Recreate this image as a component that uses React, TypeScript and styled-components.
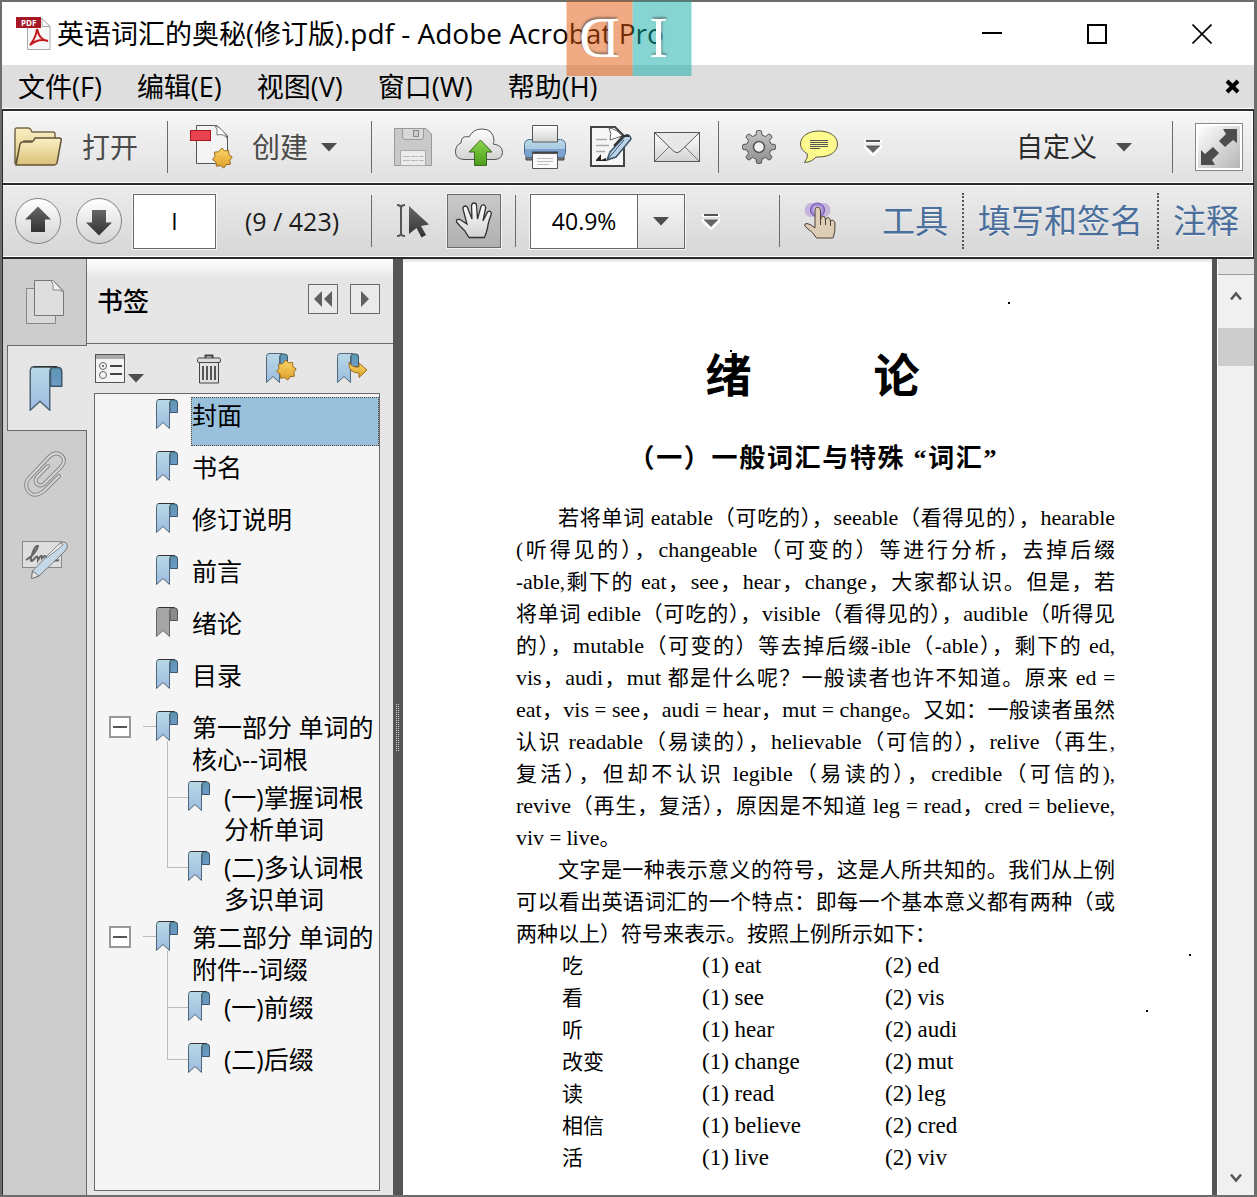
import React from "react";
import styled, { createGlobalStyle, css } from "styled-components";

const UI_FONT = `"Open Sans", "Noto Sans", "Noto Sans CJK SC", sans-serif`;
const BOOK_FONT = `"Liberation Serif", "Noto Sans CJK SC", serif`;

const Global = createGlobalStyle`
  * { box-sizing: border-box; }
  body { margin: 0; font-family: ${UI_FONT}; color: #000; }
  button { border: 0; padding: 0; margin: 0; background: none; font: inherit; color: inherit; cursor: pointer; }
  svg { display: block; flex: none; }
`;

/* ---------- window ---------- */

const Frame = styled.div`
  position: relative;
  min-height: 100vh;
  padding: 2px 3px 2px 2px;
  background: #6c6e6c;
  display: flex;
  flex-direction: column;
`;

const TitleBar = styled.header`
  display: flex;
  align-items: center;
  height: 63px;
  padding-left: 14px;
  background: #fff;
`;

const WindowTitle = styled.h1`
  flex: 1;
  margin: 0 0 0 6px;
  font-size: 27px;
  line-height: 36px;
  font-weight: 400;
  white-space: nowrap;
`;

const AppName = styled.span`
  font-size: 28px;
`;

const WindowButton = styled.button`
  width: 105px;
  height: 60px;
  display: flex;
  align-items: center;
  justify-content: center;
`;

const Watermark = styled.div`
  position: absolute;
  top: 1px;
  left: 50%;
  transform: translateX(-50%);
  display: flex;
  height: 75px;
  pointer-events: none;
`;

const WatermarkHalf = styled.span<{ $tint: string; $width: number; $flip?: boolean }>`
  width: ${(p) => p.$width}px;
  padding-right: ${(p) => (p.$flip ? 0 : 6)}px;
  background: ${(p) => p.$tint};
  display: flex;
  align-items: center;
  justify-content: center;
  color: #fff;
  font-family: "Liberation Serif", serif;
  font-size: 56px;
  line-height: 75px;
  text-shadow: 1px -2px 2px rgba(60, 60, 60, 0.5);
  ${(p) => p.$flip && "transform: scaleX(-1);"}
`;

const MenuBar = styled.nav`
  display: flex;
  align-items: center;
  gap: 35px;
  height: 44px;
  padding: 0 11px 0 16px;
  background: #dedede;
  border-bottom: 1px solid #fff;
`;

const MenuItem = styled.button`
  font-size: 27px;
  line-height: 36px;
  white-space: nowrap;
`;

const MenuClose = styled.button`
  margin-left: auto;
`;

/* ---------- toolbars ---------- */

const Toolbar = styled.div<{ $from: string; $to: string }>`
  display: flex;
  align-items: center;
  height: 74px;
  border-top: 2px solid #2b2b2b;
  border-left: 1px solid #2b2b2b;
  border-right: 1px solid #2b2b2b;
  background: linear-gradient(${(p) => p.$from}, ${(p) => p.$to});
  box-shadow: inset 0 1px #fff, inset 0 -1px #fff, inset -1px 0 #fff;
  color: #4a4a4a;
`;

const Group = styled.div<{ $left?: number; $right?: number; $gap?: number; $push?: boolean }>`
  display: flex;
  align-items: center;
  height: 52px;
  gap: ${(p) => p.$gap ?? 0}px;
  padding-left: ${(p) => p.$left ?? 0}px;
  padding-right: ${(p) => p.$right ?? 0}px;
  ${(p) => p.$push && "margin-left: auto;"}
`;

const Divider = styled.span<{ $dotted?: boolean }>`
  height: ${(p) => (p.$dotted ? 56 : 52)}px;
  border-left: ${(p) => (p.$dotted ? "2px dotted #555" : "1px solid #6a6a6a")};
`;

const ToolButton = styled.button<{ $width?: number; $gap?: number; $dark?: boolean }>`
  display: flex;
  align-items: center;
  justify-content: ${(p) => (p.$width ? "center" : "flex-start")};
  gap: ${(p) => p.$gap ?? 0}px;
  ${(p) => p.$width && `width: ${p.$width}px;`}
  height: 52px;
  font-size: ${(p) => (p.$dark ? 27 : 28)}px;
  line-height: 40px;
  color: ${(p) => (p.$dark ? "#2b2b2b" : "#4a4a4a")};
  white-space: nowrap;
`;

const PressedButton = styled(ToolButton)`
  height: 54px;
  border: 1px solid #6a6a6a;
  background: linear-gradient(#c9c9c9, #b0b0b0);
  box-shadow: 0 0 0 1px #f2f2f2;
`;

const FullScreenButton = styled.button`
  width: 48px;
  height: 48px;
  padding: 2px;
  border: 1px solid #888;
  background: linear-gradient(135deg, #fff, #b5b5b5) content-box, #fff;
`;

const fieldBox = css`
  height: 55px;
  border: 1px solid #666;
  background: #fff;
  font-family: ${UI_FONT};
  font-size: 23px;
  color: #000;
  text-align: center;
  outline: 0;
`;

const PageInput = styled.input`
  ${fieldBox}
  width: 83px;
  padding: 0;
  box-shadow: 0 0 0 1px #f5f5f5;
`;

const PageCount = styled.span`
  font-size: 25px;
  line-height: 32px;
  color: #1c1c1c;
  white-space: nowrap;
`;

const Combo = styled.div`
  display: flex;
  width: 155px;
  box-shadow: 0 0 0 1px #f5f5f5;
`;

const ComboInput = styled.input`
  ${fieldBox}
  flex: 1;
  min-width: 0;
  padding: 0;
`;

const ComboButton = styled.button`
  width: 47px;
  height: 55px;
  border: 1px solid #666;
  border-left: 0;
  background: linear-gradient(#f6f6f6, #dedede);
  display: flex;
  align-items: center;
  justify-content: center;
`;

const PaneLink = styled.button`
  padding: 0 14px;
  font-size: 33px;
  line-height: 44px;
  color: #4b6f9c;
  text-shadow: 0 1px #f2f2f2;
  white-space: nowrap;
`;

/* ---------- work area ---------- */

const WorkArea = styled.div`
  flex: 1;
  display: flex;
  border-top: 2px solid #2b2b2b;
  border-left: 1px solid #2b2b2b;
`;

const Rail = styled.nav`
  width: 84px;
  display: flex;
  flex-direction: column;
  background: linear-gradient(to left, #6a6a6a 1px, #cdcdcd 1px);
`;

const RailTab = styled.button<{ $active?: boolean }>`
  height: 86px;
  display: flex;
  align-items: center;
  justify-content: center;
  ${(p) =>
    p.$active &&
    `
    margin-left: 4px;
    padding-right: 4px;
    background: #e6e6e6;
    border: 1px solid #6a6a6a;
    border-right: 0;
  `}
`;

const Panel = styled.aside`
  width: 306px;
  display: flex;
  flex-direction: column;
  background: #e6e6e6;
`;

const PanelHeader = styled.div`
  display: flex;
  align-items: center;
  gap: 12px;
  height: 85px;
  padding: 0 13px 4px 10px;
  border-bottom: 1px solid #6a6a6a;
  background: linear-gradient(#fff, #e6e6e6 20px);
`;

const PanelTitle = styled.h2`
  flex: 1;
  margin: 0;
  padding-top: 4px;
  font-size: 26px;
  line-height: 36px;
  font-weight: 500;
`;

const SquareButton = styled.button`
  width: 30px;
  height: 30px;
  border: 1px solid #6a6a6a;
  display: flex;
  align-items: center;
  justify-content: center;
  background: #eaeaea;
`;

const PanelTools = styled.div`
  display: grid;
  grid-template-columns: 102px 69px 71px 31px;
  align-items: center;
  height: 49px;
  padding-left: 8px;
`;

const OptionsButton = styled.button`
  display: flex;
  align-items: flex-end;
  gap: 2px;
`;

const Tree = styled.ul`
  flex: 1;
  list-style: none;
  margin: 0 13px 4px 7px;
  padding: 3px 0 0 14px;
  border: 1px solid #6a6a6a;
  background: #f5f5f5;
`;

const Branch = styled.ul`
  list-style: none;
  margin: 0;
  padding: 0 0 0 32px;
`;

const Node = styled.li<{ $child?: boolean; $span?: number }>`
  position: relative;
  ${(p) =>
    p.$child &&
    css`
      &::before {
        content: "";
        position: absolute;
        left: 26px;
        top: ${18 - p.$span!}px;
        width: 22px;
        height: ${p.$span}px;
        border-left: 1px solid #bbb;
        border-bottom: 1px solid #bbb;
      }
    `}
`;

const NodeRow = styled.div`
  display: grid;
  grid-template-columns: 22px 12px 13px 22px 14px 1fr;
  align-items: start;
`;

const Expander = styled.button`
  grid-column: 1;
  width: 22px;
  height: 22px;
  margin-top: 7px;
  border: 2px solid #999;
  background: #fff;
  display: flex;
  align-items: center;
  justify-content: center;
`;

const Stub = styled.span`
  grid-column: 3;
  height: 18px;
  border-bottom: 1px solid #bbb;
`;

const NodeIcon = styled.span`
  position: relative;
  grid-column: 4;
  padding-top: 2px;
`;

const NodeLabel = styled.a<{ $selected?: boolean }>`
  grid-column: 6;
  min-height: 49px;
  margin: 0 0 3px -1px;
  padding: 1px 0 0;
  border: 1px ${(p) => (p.$selected ? "dotted #5a4a3a" : "solid transparent")};
  background: ${(p) => (p.$selected ? "#99c1dc" : "transparent")};
  color: #000;
  text-decoration: none;
  font-size: 25px;
  line-height: 32px;
  white-space: pre;
`;

const Splitter = styled.div`
  width: 10px;
  padding-right: 2px;
  display: flex;
  align-items: center;
  justify-content: center;
  background: #555;
`;

const Grip = styled.span`
  width: 3px;
  height: 48px;
  background: repeating-linear-gradient(#555 0 1px, transparent 1px 2px),
    repeating-linear-gradient(to right, #ccc 0 1px, #555 1px 2px);
`;

const Page = styled.main`
  position: relative;
  flex: 1;
  min-width: 0;
  padding: 86px 97px 20px 113px;
  background: linear-gradient(#ddd, #fff 4px);
  font-family: ${BOOK_FONT};
`;

const Speck = styled.i<{ $x: number; $y: number }>`
  position: absolute;
  left: ${(p) => p.$x}px;
  top: ${(p) => p.$y}px;
  width: 2px;
  height: 2px;
  background: #000;
`;

const Headings = styled.header`
  padding-right: 6px;
`;

const Chapter = styled.h1`
  display: flex;
  justify-content: center;
  gap: 122px;
  margin: 0;
  font-size: 46px;
  line-height: 64px;
  font-weight: 700;
`;

const Section = styled.h2`
  width: 368px;
  margin: 34px auto 27px;
  font-size: 26px;
  line-height: 32px;
  font-weight: 700;
  text-align: justify;
  text-align-last: justify;
  white-space: nowrap;
`;

const Paragraph = styled.p`
  margin: 0;
  font-size: 21px;
  line-height: 32px;
`;

const Line = styled.span<{ $indent?: boolean; $loose?: boolean }>`
  display: block;
  height: 32px;
  white-space: nowrap;
  padding-left: ${(p) => (p.$indent ? 42 : 0)}px;
  text-align: justify;
  text-align-last: ${(p) => (p.$loose ? "left" : "justify")};
`;

const Latin = styled.span`
  font-size: 22px;
`;

const Roots = styled.table`
  margin-left: 46px;
  border-collapse: collapse;
  font-size: 23px;
  line-height: 32px;
`;

const RootWord = styled.td`
  width: 140px;
  padding: 0;
  font-size: 21px;
`;

const RootCell = styled.td<{ $width?: number }>`
  padding: 0;
  ${(p) => p.$width && `width: ${p.$width}px;`}
  white-space: nowrap;
`;

const PageEdge = styled.div`
  width: 5px;
  background: #555;
`;

const ScrollBar = styled.div`
  width: 37px;
  display: flex;
  flex-direction: column;
  background: #f0f0f0;
  border-left: 1px solid #fff;
`;

const SplitHandle = styled.div`
  height: 16px;
  background: #e2e2e2;
  border-bottom: 1px solid #999;
`;

const ScrollButton = styled.button`
  height: 38px;
  padding-top: 4px;
  display: flex;
  align-items: center;
  justify-content: center;
`;

const Thumb = styled.div`
  height: 38px;
  margin: 15px 0 auto;
  background: #cdcdcd;
`;

/* ---------- icons ---------- */

const Defs = () => (
  <svg width="0" height="0" style={{ position: "absolute" }} aria-hidden="true">
    <defs>
      <linearGradient id="blue" x1="0" y1="0" x2="0" y2="1">
        <stop offset="0" stopColor="#b9d9e6" />
        <stop offset="1" stopColor="#9bbbe0" />
      </linearGradient>
      <linearGradient id="blueDark" x1="0" y1="0" x2="0" y2="1">
        <stop offset="0" stopColor="#5b96b0" />
        <stop offset="1" stopColor="#6f9ac8" />
      </linearGradient>
      <linearGradient id="paper" x1="0" y1="0" x2="0" y2="1">
        <stop offset="0" stopColor="#fff" />
        <stop offset="1" stopColor="#d2d2d2" />
      </linearGradient>
      <linearGradient id="folder" x1="0" y1="0" x2="0" y2="1">
        <stop offset="0" stopColor="#faf0c4" />
        <stop offset="1" stopColor="#dcc078" />
      </linearGradient>
      <linearGradient id="gold" x1="0" y1="0" x2="0" y2="1">
        <stop offset="0" stopColor="#fbd667" />
        <stop offset="1" stopColor="#e0a02c" />
      </linearGradient>
      <linearGradient id="metal" x1="0" y1="0" x2="0" y2="1">
        <stop offset="0" stopColor="#c4c4c4" />
        <stop offset="1" stopColor="#8e8e8e" />
      </linearGradient>
      <linearGradient id="dark" x1="0" y1="0" x2="0" y2="1">
        <stop offset="0" stopColor="#666" />
        <stop offset="1" stopColor="#333" />
      </linearGradient>
      <linearGradient id="green" x1="0" y1="0" x2="0" y2="1">
        <stop offset="0" stopColor="#8bd64a" />
        <stop offset="1" stopColor="#4c9c1e" />
      </linearGradient>
    </defs>
  </svg>
);

const STAR =
  "M10 0 L12.6 3 L16.6 2.4 L16.9 6.6 L20.2 9 L17.8 12.2 L18.4 16.2 L14.2 16.7 L11.8 20 L8.6 17.6 L4.4 18.2 L4 14 L0.6 11.6 L3 8.3 L2.4 4.2 L6.6 3.7 Z";

const Star = ({ x, y }: { x: number; y: number }) => (
  <path transform={`translate(${x} ${y})`} d={STAR} fill="url(#gold)" stroke="#9a6a1e" />
);

const Ribbon = ({ w = 22, h = 30, grey = false }: { w?: number; h?: number; grey?: boolean }) => (
  <svg width={w} height={h} viewBox="0 0 22 30">
    <path d="M14 1 H19 Q21.500 1 21.500 4 V13.500 H14 Z" fill={grey ? "#8b8b8b" : "url(#blueDark)"} stroke={grey ? "#555" : "#3d5568"} />
    <path d="M3 .5 H16 Q13.500 1.500 13.500 4 V29.500 L7 23.500 L.5 29.500 V3.500 Q.5 .5 3 .5 Z" fill={grey ? "#a5a5a5" : "url(#blue)"} stroke={grey ? "#666" : "#4f6678"} />
    <path d="M2.500 .5 H18.500" stroke="#333" />
  </svg>
);

const Caret = () => (
  <svg width="18" height="10" viewBox="0 0 18 10">
    <path d="M1 1 H17 L9 9.500 Z" fill="#4d4d4d" />
  </svg>
);

const More = () => (
  <svg width="18" height="17" viewBox="0 0 18 17">
    <path d="M0 2.500 H18 M0 7.500 H18 M1 8 L9 15.500 L17 8" stroke="#fff" strokeWidth="3" fill="none" />
    <path d="M2 2 H16" stroke="#555" strokeWidth="2" />
    <path d="M2 7 H16 L9 14 Z" fill="#666" />
    <path d="M2 7 H16" stroke="#555" />
  </svg>
);

const PdfIcon = () => (
  <svg width="35" height="34" viewBox="0 0 35 34">
    <path d="M11.500 1.500 H26 L34 9.500 V32.500 H11.500 Z" fill="#f7f7f7" stroke="#aaa" />
    <path d="M26 1.500 V9.500 H34 Z" fill="#fff" stroke="#aaa" />
    <path d="M14 28 C17 24 20 21 21 12 C23 20 26 23 32 24 C26 22 19 24 14 28 Z" fill="none" stroke="#c4161c" strokeWidth="2" />
    <rect x="0" y="0" width="25" height="11" fill="#a51926" />
    <text x="5" y="9" fontFamily="Open Sans, sans-serif" fontSize="8" fontWeight="700" fill="#fff">PDF</text>
  </svg>
);

const FolderIcon = () => (
  <svg width="48" height="40" viewBox="0 0 48 40">
    <path d="M1 37 V3 Q1 1 3 1 H14 Q16 1 17 3 L18 5 H39 Q41 5 41 7 V14 H10 L1 37" fill="url(#folder)" stroke="#77694a" strokeWidth="1.500" />
    <path d="M2 38 L6 17 Q7 15 9 15 H17 Q19 15 20 13 L21 11 H45 Q48 11 47 14 L43 36 Q42 38 40 38 Z" fill="url(#folder)" stroke="#5f5238" strokeWidth="1.500" />
  </svg>
);

const CreateIcon = () => (
  <svg width="44" height="44" viewBox="0 0 44 44">
    <path d="M6.500 .5 H27 L37.500 11 V38.500 H6.500 Z" fill="#f4f4f4" stroke="#555" />
    <path d="M25 .5 Q28 4 27 10 Q34 8 37.500 14 Q34 4 25 .5 Z" fill="#fff" stroke="#777" />
    <rect x=".5" y="5.500" width="20" height="10" fill="#ea4350" stroke="#a8141f" />
    <Star x={22} y={23} />
  </svg>
);

const SaveIcon = () => (
  <svg width="38" height="38" viewBox="0 0 38 38">
    <path d="M.5 .5 H32 L37.500 6 V37.500 H.5 Z" fill="#c9c9c9" stroke="#999" />
    <path d="M8.500 .5 H29.500 V9 Q29.500 11.500 27 11.500 H11 Q8.500 11.500 8.500 9 Z" fill="#d8d8d8" stroke="#999" />
    <rect x="19.500" y="2.500" width="5" height="6" fill="#ccc" stroke="#888" />
    <rect x="6.500" y="22.500" width="25" height="15" fill="#ececec" stroke="#aaa" />
    <path d="M9 28.500 H30 M9 32.500 H30" stroke="#bbb" strokeDasharray="7 1" />
  </svg>
);

const CloudIcon = () => (
  <svg width="48" height="39" viewBox="0 0 48 39">
    <path d="M9 31.500 Q.5 31 .5 24 Q.5 17 6 15 Q6 7 14 9 Q18 1 27 1 Q38 1 39 12 Q39 15 38 16 Q47.500 17 47.500 24.500 Q47 31 40 31.500 Z" fill="url(#paper)" stroke="#555" />
    <path d="M25.500 12 L37 24 H31.500 V37.500 H19.500 V24 H14 Z" fill="url(#green)" stroke="#3c6a1c" />
  </svg>
);

const PrintIcon = () => (
  <svg width="42" height="44" viewBox="0 0 42 44">
    <path d="M2 30 H40 V35 H2 Z" fill="#777" stroke="#444" />
    <rect x=".5" y="14.500" width="41" height="18" rx="5" fill="url(#blue)" stroke="#4c6a88" />
    <path d="M1 24 H41 V29 Q40 32 37 32 H5 Q1 32 1 29 Z" fill="#7ba3d0" />
    <path d="M8.500 .5 H33.500 V17 H8.500 Z" fill="url(#paper)" stroke="#555" />
    <path d="M8 27.500 H34" stroke="#444" strokeWidth="2" />
    <path d="M8.500 28.500 H33.500 V43.500 H8.500 Z" fill="#fafafa" stroke="#555" />
    <path d="M13 33.500 H29 M13 36.500 H29 M13 39.500 H25" stroke="#bbb" />
  </svg>
);

const EditIcon = () => (
  <svg width="42" height="42" viewBox="0 0 42 42">
    <path d="M1 1 H25 L34 10 V40 H1 Z" fill="#f6f6f6" stroke="#444" strokeWidth="2" />
    <path d="M19 2 Q22 7 20 14 L32 10 Q27 3 19 2 Z" fill="#fff" stroke="#666" />
    <path d="M6 13.500 H17 M6 19.500 H19 M6 25.500 H15" stroke="#aaa" strokeWidth="1.500" />
    <path d="M6 34 L11 28 L11 34 L16 32 V35 H6 Z" fill="#222" />
    <path d="M17 34 L20 26 L36 9 Q40 8 41 13 L26 31 Z" fill="#bcd3ea" stroke="#3e5468" strokeWidth="1.500" />
    <path d="M18 33 L34 14" stroke="#3e5468" />
    <path d="M24 20 L33 10 L39 10" stroke="#333" strokeWidth="2" fill="none" />
  </svg>
);

const MailIcon = () => (
  <svg width="46" height="30" viewBox="0 0 46 30">
    <rect x=".5" y=".5" width="45" height="29" fill="url(#paper)" stroke="#555" />
    <path d="M1 29 L16 14 M45 29 L30 14" stroke="#777" fill="none" />
    <path d="M1 1 L20 19.500 Q23 22 26 19.500 L45 1" fill="#e8e8e8" stroke="#555" />
  </svg>
);

const GearIcon = () => (
  <svg width="34" height="34" viewBox="0 0 34 34">
    <g fill="url(#metal)" stroke="#555">
      <path d="M14.500 1 Q17 -.5 19.500 1 L20 5 L23.500 6.500 L26.800 4 Q29.500 4.500 30 7.200 L27.500 10.500 L29 14 L33 14.500 Q34.500 17 33 19.500 L29 20 L27.500 23.500 L30 26.800 Q29.500 29.500 26.800 30 L23.500 27.500 L20 29 L19.500 33 Q17 34.500 14.500 33 L14 29 L10.500 27.500 L7.200 30 Q4.500 29.500 4 26.800 L6.500 23.500 L5 20 L1 19.500 Q-.5 17 1 14.500 L5 14 L6.500 10.500 L4 7.200 Q4.500 4.500 7.200 4 L10.500 6.500 L14 5 Z" />
      <circle cx="17" cy="17" r="5.500" fill="#f2f2f2" strokeWidth="1.500" />
    </g>
  </svg>
);

const CommentIcon = () => (
  <svg width="38" height="34" viewBox="0 0 38 34">
    <path d="M19 1 C30 1 37.500 6.500 37.500 14 C37.500 21.500 30 27 19 27 L16 27 Q12 32 4.500 32.500 Q8 28 7.500 24 Q.5 20 .5 14 C.5 6.500 8 1 19 1 Z" fill="#fdfb8e" stroke="#5c5840" />
    <path d="M10 10.500 H28 M10 12.500 H28 M10 14.500 H28 M10 16.500 H28 M10 18.500 H20" stroke="#555" />
  </svg>
);

const ExpandIcon = () => (
  <svg width="42" height="42" viewBox="0 0 42 42">
    <path d="M25 3 H39 V17 L35 14 L27 21 L21 15 L28 8 Z" fill="#4d4d4d" />
    <path d="M17 39 H3 V24 L7 28 L15 21 L21 27 L14 34 Z" fill="#4d4d4d" />
  </svg>
);

const RoundArrow = ({ down }: { down?: boolean }) => (
  <svg width="46" height="46" viewBox="0 0 46 46">
    <circle cx="23" cy="23" r="22.500" fill="url(#paper)" stroke="#808080" />
    <path d={down ? "M16 12 H30 V24.500 H36 L23 37.500 L10 24.500 H16 Z" : "M16 34 H30 V21.500 H36 L23 8.500 L10 21.500 H16 Z"} fill="url(#dark)" />
  </svg>
);

const SelectIcon = () => (
  <svg width="34" height="36" viewBox="0 0 34 36">
    <path d="M1 2 Q5 2 5 5 Q5 2 9 2 M5 4 V31 M1 33 Q5 33 5 30 Q5 33 9 33" stroke="#555" strokeWidth="2" fill="none" />
    <path d="M13 3 L33 21.500 L25 23 L30 32 L25.500 34.500 L20.500 25 L13 31 Z" fill="url(#dark)" />
  </svg>
);

const HandIcon = () => (
  <svg width="38" height="38" viewBox="0 0 38 38">
    <path d="M13 34 Q10 28 5 24 L1.500 20 Q1 16.500 5 17.500 L12 22 L8 7 Q8 4 10.500 4 Q12.500 4 13 7 L17 17 L16.500 3.500 Q17 1 19 1 Q21.500 1 21.500 3.500 L22.500 17 L26 4.500 Q27 2.500 29 3 Q31 4 30.500 6.500 L28 19 L32.500 10 Q34 8.500 35.500 9.500 Q37 11 36 13 Q33 21 32.500 26 Q31 32 29.500 35.500 H14 Z" fill="url(#paper)" stroke="#333" strokeWidth="1.300" />
  </svg>
);

const TouchIcon = () => (
  <svg width="32" height="38" viewBox="0 0 32 38">
    <circle cx="7.500" cy="8" r="7" fill="#c3b6da" />
    <circle cx="19.500" cy="8" r="7" fill="#c3b6da" />
    <circle cx="13.500" cy="8" r="7" fill="#a78bd8" stroke="#6d4cb0" />
    <circle cx="13.500" cy="8" r="4" fill="#e6dcf8" />
    <path d="M11 24 V8 Q11 5 13.500 5 Q16.500 5 16.500 8 V18 Q17 14 19 14 Q21.500 14 21.500 18 Q22 15.500 24 15.500 Q26 15.500 26.500 19 Q28 17.500 29.500 18.500 Q31 19.500 31 22 Q31.500 30 29 36 H12.500 Q9 30 4 27 L.8 24 Q0 21.500 3 21.500 Q7 22 11 26 Z" fill="#dccdb4" stroke="#4a4038" />
    <path d="M16.500 18 V23 M21.500 18 V23 M26.500 19 V24" stroke="#4a4038" />
  </svg>
);

const PagesIcon = () => (
  <svg width="38" height="44" viewBox="0 0 38 44">
    <rect x=".5" y="8.500" width="29" height="35" fill="#d8d8d8" stroke="#888" />
    <path d="M8.500 .5 H27 L37.500 11 V35.500 H8.500 Z" fill="#dedede" stroke="#777" />
    <path d="M25 .5 Q28 4 27 10 Q34 9 37.500 12 L27 .5 Z" fill="#f2f2f2" stroke="#888" />
  </svg>
);

const ClipIcon = () => {
  const d = "M35 25 L20 40 Q9 48 3.500 39 Q0 33 5 27 L25 6 Q31 0 37 4 Q43 9 37 16 L20 33 Q16 36 13 33 Q10 30 13 26 L24 15";
  return (
    <svg width="42" height="46" viewBox="0 0 42 46" fill="none" strokeLinecap="round">
      <path d={d} stroke="#888" strokeWidth="4" />
      <path d={d} stroke="#d6d6d6" strokeWidth="2" />
    </svg>
  );
};

const SignIcon = () => (
  <svg width="46" height="40" viewBox="0 0 46 40">
    <rect x=".5" y="1.500" width="39" height="26" fill="#dedede" stroke="#888" />
    <path d="M4 20 Q14 14 16 6 Q13 4 9 18 Q8 24 13 18 Q16 14 16 20 Q20 13 20 18 Q24 14 25 18 Q31 22 37 20" fill="none" stroke="#666" strokeWidth="2" />
    <path d="M9.500 38.500 L10.500 31 L37 4 Q42 0 45 4 Q46.500 8 43 11 L17 36 Z" fill="#c4d8e8" stroke="#777" />
    <path d="M23 18 L36 5 Q40 2 41 5 L26 17 Z" fill="#eee" stroke="#888" />
    <path d="M9.500 38.500 L10.500 31 L17 36 Z" fill="#e8e8e8" stroke="#777" />
  </svg>
);

const OptionsIcon = () => (
  <svg width="30" height="29" viewBox="0 0 30 29">
    <rect x=".5" y=".5" width="29" height="28" fill="#f4f4f4" stroke="#555" />
    <path d="M1 1 H29 V5 H1 Z" fill="#aaa" />
    <circle cx="8" cy="12" r="3.500" fill="none" stroke="#666" />
    <circle cx="8" cy="12" r="1" fill="#444" />
    <circle cx="8" cy="21" r="3.500" fill="none" stroke="#666" />
    <path d="M15 12 H27 M15 20 H27" stroke="#444" strokeWidth="2" />
  </svg>
);

const TrashIcon = () => (
  <svg width="24" height="30" viewBox="0 0 24 30">
    <path d="M8.500 4 V1.500 H15.500 V4" fill="none" stroke="#444" strokeWidth="2" />
    <path d="M2.500 8 H21.500 V29 H2.500 Z" fill="#e2e2e2" stroke="#444" />
    <rect x=".5" y="4" width="23" height="4.500" rx="1.500" fill="#ddd" stroke="#444" />
    <path d="M6 12 V26 M10 12 V26 M14 12 V26 M18 12 V26" stroke="#555" strokeWidth="2" />
  </svg>
);

const NewBookmarkIcon = () => (
  <svg width="31" height="31" viewBox="0 0 31 31">
    <path d="M14 1 H19 Q21.500 1 21.500 4 V13.500 H14 Z" fill="url(#blueDark)" stroke="#3d5568" />
    <path d="M3 .5 H16 Q13.500 1.500 13.500 4 V29.500 L7 23.500 L.5 29.500 V3.500 Q.5 .5 3 .5 Z" fill="url(#blue)" stroke="#4f6678" />
    <Star x={10} y={7} />
  </svg>
);

const GoBookmarkIcon = () => (
  <svg width="31" height="31" viewBox="0 0 31 31">
    <path d="M14 1 H19 Q21.500 1 21.500 4 V13.500 H14 Z" fill="url(#blueDark)" stroke="#3d5568" />
    <path d="M3 .5 H16 Q13.500 1.500 13.500 4 V29.500 L7 23.500 L.5 29.500 V3.500 Q.5 .5 3 .5 Z" fill="url(#blue)" stroke="#4f6678" />
    <path d="M12 9 Q15 15 22 14 V10 L30 17 L22 24.500 V20 Q11 20 12 9 Z" fill="url(#gold)" stroke="#9a6a1e" />
  </svg>
);

const Chevron = ({ down }: { down?: boolean }) => (
  <svg width="14" height="10" viewBox="0 0 14 10">
    <path d={down ? "M2 1.500 L7 7.500 L12 1.500" : "M2 8.500 L7 2.500 L12 8.500"} fill="none" stroke="#555" strokeWidth="2.500" />
  </svg>
);

/* ---------- content ---------- */

type Item = { label: string; selected?: boolean; grey?: boolean; children?: Item[] };

const BOOKMARKS: Item[] = [
  { label: "封面", selected: true },
  { label: "书名" },
  { label: "修订说明" },
  { label: "前言" },
  { label: "绪论", grey: true },
  { label: "目录" },
  { label: "第一部分 单词的\n核心--词根", children: [{ label: "(一)掌握词根\n分析单词" }, { label: "(二)多认词根\n多识单词" }] },
  { label: "第二部分 单词的\n附件--词缀", children: [{ label: "(一)前缀" }, { label: "(二)后缀" }] },
];

const FIRST = [
  "若将单词 eatable（可吃的），seeable（看得见的），hearable",
  "(听得见的），changeable（可变的）等进行分析，去掉后缀",
  "-able,剩下的 eat，see，hear，change，大家都认识。但是，若",
  "将单词 edible（可吃的），visible（看得见的），audible（听得见",
  "的），mutable（可变的）等去掉后缀-ible（-able），剩下的 ed,",
  "vis，audi，mut 都是什么呢？一般读者也许不知道。原来 ed =",
  "eat，vis = see，audi = hear，mut = change。又如：一般读者虽然",
  "认识 readable（易读的），helievable（可信的），relive（再生,",
  "复活），但却不认识 legible（易读的），credible（可信的),",
  "revive（再生，复活），原因是不知道 leg = read，cred = believe,",
  "viv = live。",
];

const SECOND = [
  "文字是一种表示意义的符号，这是人所共知的。我们从上例",
  "可以看出英语词汇的一个特点：即每一个基本意义都有两种（或",
  "两种以上）符号来表示。按照上例所示如下：",
];

const ROOTS = [
  ["吃", "eat", "ed"],
  ["看", "see", "vis"],
  ["听", "hear", "audi"],
  ["改变", "change", "mut"],
  ["读", "read", "leg"],
  ["相信", "believe", "cred"],
  ["活", "live", "viv"],
];

const SPECKS = [
  [605, 43],
  [327, 91],
  [786, 695],
  [743, 751],
];

const mixed = (text: string) =>
  text.split(/([A-Za-z]+)/).map((part, i) => (i % 2 ? <Latin key={i}>{part}</Latin> : part));

const BookmarkNode = ({ item, child, span }: { item: Item; child?: boolean; span?: number }) => (
  <Node $child={child} $span={span}>
    <NodeRow>
      {item.children && (
        <>
          <Expander aria-label="折叠">
            <svg width="14" height="2"><path d="M0 1 H14" stroke="#555" strokeWidth="2" /></svg>
          </Expander>
          <Stub />
        </>
      )}
      <NodeIcon><Ribbon grey={item.grey} /></NodeIcon>
      <NodeLabel href="#" $selected={item.selected}>{item.label}</NodeLabel>
    </NodeRow>
    {item.children && (
      <Branch>
        {item.children.map((c, i) => (
          <BookmarkNode key={c.label} item={c} child span={i === 0 ? 56 : item.children![0].label.includes("\n") ? 70 : 52} />
        ))}
      </Branch>
    )}
  </Node>
);

export default function App() {
  return (
    <Frame>
      <Global />
      <Defs />
      <TitleBar>
        <PdfIcon />
        <WindowTitle>英语词汇的奥秘(修订版)<AppName>.pdf - Adobe Acrobat Pro</AppName></WindowTitle>
        <WindowButton aria-label="最小化">
          <svg width="20" height="20"><path d="M0 9 H20" stroke="#000" strokeWidth="2" /></svg>
        </WindowButton>
        <WindowButton aria-label="最大化">
          <svg width="20" height="20"><rect x="1" y="1" width="18" height="18" fill="none" stroke="#000" strokeWidth="2" /></svg>
        </WindowButton>
        <WindowButton aria-label="关闭">
          <svg width="20" height="20"><path d="M.5 .5 L19.500 19.500 M19.500 .5 L.5 19.500" stroke="#000" strokeWidth="1.600" /></svg>
        </WindowButton>
      </TitleBar>
      <MenuBar>
        {["文件(F)", "编辑(E)", "视图(V)", "窗口(W)", "帮助(H)"].map((m) => (
          <MenuItem key={m}>{m}</MenuItem>
        ))}
        <MenuClose aria-label="关闭文档">
          <svg width="20" height="16"><path d="M4 2 L15 13 M15 2 L4 13" stroke="#000" strokeWidth="4" /></svg>
        </MenuClose>
      </MenuBar>

      <Toolbar $from="#f6f6f6" $to="#e0e0e0">
        <Group $left={11} $right={29}>
          <ToolButton $gap={20}><FolderIcon />打开</ToolButton>
        </Group>
        <Divider />
        <Group $left={22} $right={21}>
          <ToolButton $gap={18}><CreateIcon />创建</ToolButton>
          <ToolButton $width={42} aria-label="创建选项"><Caret /></ToolButton>
        </Group>
        <Divider />
        <Group $left={8} $right={8}>
          <ToolButton $width={66} aria-label="保存"><SaveIcon /></ToolButton>
          <ToolButton $width={66} aria-label="上传"><CloudIcon /></ToolButton>
          <ToolButton $width={66} aria-label="打印"><PrintIcon /></ToolButton>
          <ToolButton $width={66} aria-label="编辑"><EditIcon /></ToolButton>
          <ToolButton $width={66} aria-label="邮件"><MailIcon /></ToolButton>
        </Group>
        <Divider />
        <Group $left={10}>
          <ToolButton $width={60} aria-label="设置"><GearIcon /></ToolButton>
          <ToolButton $width={60} aria-label="注释"><CommentIcon /></ToolButton>
          <ToolButton $width={48} aria-label="更多"><More /></ToolButton>
        </Group>
        <Group $push $right={39}>
          <ToolButton $gap={18} $dark>自定义<Caret /></ToolButton>
        </Group>
        <Divider />
        <Group $left={22} $right={10}>
          <FullScreenButton aria-label="阅读模式"><ExpandIcon /></FullScreenButton>
        </Group>
      </Toolbar>

      <Toolbar $from="#ececec" $to="#d6d6d6">
        <Group $left={12} $gap={15}>
          <ToolButton aria-label="上一页"><RoundArrow /></ToolButton>
          <ToolButton aria-label="下一页"><RoundArrow down /></ToolButton>
        </Group>
        <Group $left={11} $right={32} $gap={29}>
          <PageInput aria-label="页码" defaultValue="I" />
          <PageCount>(9 / 423)</PageCount>
        </Group>
        <Divider />
        <Group $left={24} $right={14} $gap={17}>
          <ToolButton aria-label="选择"><SelectIcon /></ToolButton>
          <PressedButton $width={54} aria-label="手形工具" aria-pressed="true"><HandIcon /></PressedButton>
        </Group>
        <Divider />
        <Group $left={14} $right={56} $gap={14}>
          <Combo>
            <ComboInput aria-label="缩放" defaultValue="40.9%" />
            <ComboButton aria-label="缩放选项"><Caret /></ComboButton>
          </Combo>
          <ToolButton $width={24} aria-label="更多"><More /></ToolButton>
        </Group>
        <Divider />
        <Group $left={24}>
          <ToolButton aria-label="触摸模式"><TouchIcon /></ToolButton>
        </Group>
        <Group $push>
          <PaneLink>工具</PaneLink>
          <Divider $dotted />
          <PaneLink>填写和签名</PaneLink>
          <Divider $dotted />
          <PaneLink>注释</PaneLink>
        </Group>
      </Toolbar>

      <WorkArea>
        <Rail>
          <RailTab aria-label="页面缩略图"><PagesIcon /></RailTab>
          <RailTab $active aria-label="书签"><Ribbon w={34} h={45} /></RailTab>
          <RailTab aria-label="附件"><ClipIcon /></RailTab>
          <RailTab aria-label="签名"><SignIcon /></RailTab>
        </Rail>
        <Panel>
          <PanelHeader>
            <PanelTitle>书签</PanelTitle>
            <SquareButton aria-label="收起">
              <svg width="18" height="16"><path d="M8 0 V16 L0 8 Z M18 0 V16 L10 8 Z" fill="#606060" /></svg>
            </SquareButton>
            <SquareButton aria-label="展开">
              <svg width="8" height="16"><path d="M0 0 V16 L8 8 Z" fill="#606060" /></svg>
            </SquareButton>
          </PanelHeader>
          <PanelTools>
            <OptionsButton aria-label="选项"><OptionsIcon /><Caret /></OptionsButton>
            <button aria-label="删除"><TrashIcon /></button>
            <button aria-label="新建书签"><NewBookmarkIcon /></button>
            <button aria-label="展开当前书签"><GoBookmarkIcon /></button>
          </PanelTools>
          <Tree>
            {BOOKMARKS.map((b) => (
              <BookmarkNode key={b.label} item={b} />
            ))}
          </Tree>
        </Panel>
        <Splitter><Grip /></Splitter>
        <Page>
          {SPECKS.map(([x, y]) => (
            <Speck key={x} $x={x} $y={y} />
          ))}
          <Headings>
            <Chapter><span>绪</span><span>论</span></Chapter>
            <Section>（一）一般词汇与特殊 “词汇”</Section>
          </Headings>
          <Paragraph>
            {FIRST.map((t, i) => (
              <Line key={t} $indent={i === 0} $loose={i === FIRST.length - 1}>{mixed(t)}</Line>
            ))}
          </Paragraph>
          <Paragraph>
            {SECOND.map((t, i) => (
              <Line key={t} $indent={i === 0} $loose={i === SECOND.length - 1}>{t}</Line>
            ))}
          </Paragraph>
          <Roots>
            <tbody>
              {ROOTS.map(([zh, a, b]) => (
                <tr key={zh}>
                  <RootWord>{zh}</RootWord>
                  <RootCell $width={183}>(1) {a}</RootCell>
                  <RootCell>(2) {b}</RootCell>
                </tr>
              ))}
            </tbody>
          </Roots>
        </Page>
        <PageEdge />
        <ScrollBar>
          <SplitHandle />
          <ScrollButton aria-label="向上滚动"><Chevron /></ScrollButton>
          <Thumb />
          <ScrollButton aria-label="向下滚动"><Chevron down /></ScrollButton>
        </ScrollBar>
      </WorkArea>

      <Watermark aria-hidden="true">
        <WatermarkHalf $tint="rgba(225, 87, 10, 0.5)" $width={66} $flip>D</WatermarkHalf>
        <WatermarkHalf $tint="rgba(15, 172, 165, 0.5)" $width={59}>I</WatermarkHalf>
      </Watermark>
    </Frame>
  );
}
